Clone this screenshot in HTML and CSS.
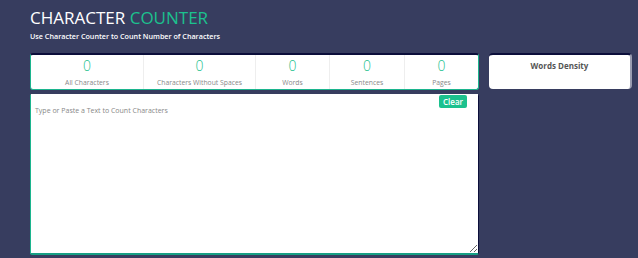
FILE: index.html
```html
<!DOCTYPE html>
<html>
<head>
  <title>Character Counter</title>
  <link rel="stylesheet" href="styles.css">
</head>
<body>

  <div class="page">
    <h1 class="title">CHARACTER <span class="accent">COUNTER</span></h1>
    <p class="subtitle">Use Character Counter to Count Number of Characters</p>

    <div class="layout">
      <div class="main">
        <div class="stats">
          <div class="stat"><span class="num" id="chars">0</span><span class="name">All Characters</span></div>
          <div class="stat"><span class="num" id="nospace">0</span><span class="name">Characters Without Spaces</span></div>
          <div class="stat"><span class="num" id="words">0</span><span class="name">Words</span></div>
          <div class="stat"><span class="num" id="sentences">0</span><span class="name">Sentences</span></div>
          <div class="stat"><span class="num" id="pages">0</span><span class="name">Pages</span></div>
        </div>

        <div class="editor">
          <button class="clear" id="clear">Clear</button>
          <textarea id="text" placeholder="Type or Paste a Text to Count Characters"></textarea>
        </div>
      </div>

      <div class="density">
        <h3>Words Density</h3>
      </div>
    </div>
  </div>

  <script>
    const text = document.getElementById("text");

    function update() {
      const val = text.value;
      const words = val.trim() ? val.trim().split(/\s+/).length : 0;
      document.getElementById("chars").textContent = val.length;
      document.getElementById("nospace").textContent = val.replace(/\s/g, "").length;
      document.getElementById("words").textContent = words;
      document.getElementById("sentences").textContent = (val.match(/[.!?]+/g) || []).length;
      document.getElementById("pages").textContent = Math.ceil(words / 275);
    }

    text.addEventListener("input", update);
    document.getElementById("clear").addEventListener("click", function () {
      text.value = "";
      update();
    });
  </script>

</body>
</html>
```

FILE: styles.css
```css
body {
  margin: 0;
  background-color: #373d5f;
  font-family: "Open Sans", Arial, sans-serif;
}
.page {
  padding: 7px 0 0 30px;
}
.title {
  margin: 0;
  font-size: 17px;
  font-weight: 400;
  color: #fff;
  line-height: 21px;
}
.accent {
  color: #1cc18e;
}
.subtitle {
  margin: 3px 0 0;
  font-size: 7.2px;
  font-weight: 600;
  color: #fff;
}
.layout {
  display: flex;
  gap: 10px;
  margin-top: 12px;
}
.main {
  width: 449px;
  flex-shrink: 0;
}
.stats {
  display: grid;
  grid-template-columns: 112px 112px 74px 75px 1fr;
  background: #fff;
  height: 37px;
  border: 1px solid #1cb58e;
  border-top: 2px solid #0b0e3a;
  border-radius: 3px;
  box-sizing: border-box;
}
.stat {
  display: flex;
  flex-direction: column;
  align-items: center;
  border-left: 1px solid #eee;
}
.stat:first-child {
  border-left: none;
}
.num {
  color: #1cc18e;
  font-size: 14px;
  font-weight: 300;
  line-height: 18px;
  margin-top: 2px;
}
.name {
  color: #888;
  font-size: 6.8px;
  margin-top: 3px;
}
.editor {
  position: relative;
  margin-top: 4px;
  height: 161px;
  background: #fff;
  border-left: 1px solid #1cb58e;
  border-right: 1px solid #0b0e3a;
  border-bottom: 2px solid #17a085;
  box-sizing: border-box;
  border-radius: 2px;
}
.clear {
  position: absolute;
  top: 1px;
  right: 11px;
  background: #1cc18e;
  color: #fff;
  border: none;
  border-radius: 2px;
  font-family: "Open Sans", Arial, sans-serif;
  font-size: 8px;
  font-weight: 600;
  padding: 0 4px;
  height: 13px;
  line-height: 13px;
}
textarea {
  width: 100%;
  height: 100%;
  box-sizing: border-box;
  border: none;
  resize: vertical;
  padding: 12px 4px;
  font-family: "Open Sans", Arial, sans-serif;
  font-size: 7px;
  color: #555;
  outline: none;
}
textarea::placeholder {
  color: #888;
}
.density {
  width: 143px;
  height: 36px;
  background: #fff;
  border-top: 2px solid #0b0e3a;
  border-right: 2px solid #9a9db0;
  border-radius: 4px;
  box-sizing: border-box;
  text-align: center;
}
.density h3 {
  margin: 0;
  padding-top: 5px;
  font-size: 8px;
  font-weight: 700;
  color: #555;
}
```
